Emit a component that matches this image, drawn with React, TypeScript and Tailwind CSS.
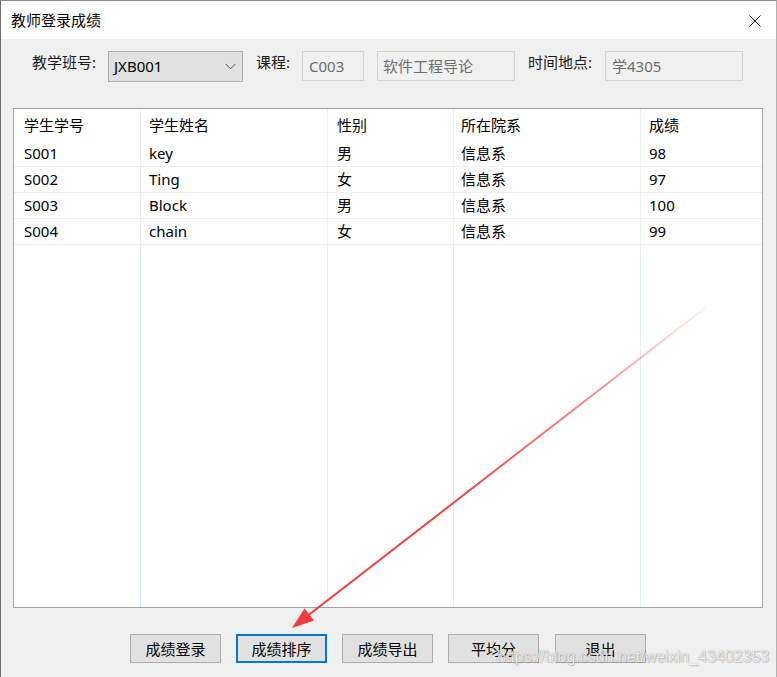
import React from "react";

const cols = [
  { w: "w-[127px]", pl: "pl-[10px]" },
  { w: "w-[187px]", pl: "pl-[8px]" },
  { w: "w-[126px]", pl: "pl-[9px]" },
  { w: "w-[187px]", pl: "pl-[7px]" },
  { w: "w-[121px]", pl: "pl-[8px]" },
];

const header = ["学生学号", "学生姓名", "性别", "所在院系", "成绩"];
const rows = [
  ["S001", "key", "男", "信息系", "98"],
  ["S002", "Ting", "女", "信息系", "97"],
  ["S003", "Block", "男", "信息系", "100"],
  ["S004", "chain", "女", "信息系", "99"],
];

function Row({ cells, h, bottom }: { cells: string[]; h: string; bottom: boolean }) {
  return (
    <div className={`flex ${h} ${bottom ? "border-b border-[#efefef]" : ""}`}>
      {cells.map((c, i) => (
        <div
          key={i}
          className={`${cols[i].w} ${cols[i].pl} flex items-center ${i < 4 ? "border-r border-[#efefef]" : ""}`}
        >
          {c}
        </div>
      ))}
    </div>
  );
}

export default function App() {
  return (
    <div
      className="relative w-[777px] h-[677px] overflow-hidden bg-[#f0f0f0] border-l border-t border-r border-l-[#6e6e6e] border-t-[#8c8c8c] border-r-[#b0b0b0] text-[15px] text-black flex flex-col"
      style={{ fontFamily: '"Noto Sans", "Noto Sans CJK SC", sans-serif' }}
    >
      {/* Title bar */}
      <div className="h-[38px] bg-white flex items-center justify-between pl-[10px] pr-[15px] shrink-0">
        <span className="leading-[20px]">教师登录成绩</span>
        <svg width="12" height="12" viewBox="0 0 12 12" className="mt-[1px]">
          <path d="M0.5 0.5 L11.5 11.5 M11.5 0.5 L0.5 11.5" stroke="#111" strokeWidth="1" fill="none" />
        </svg>
      </div>

      {/* Form row */}
      <div className="flex items-start pt-[12px] pl-[31px] shrink-0">
        <div className="w-[76px] leading-[20px] mt-[1px] text-[#1a1a1a]">教学班号:</div>
        <div className="w-[135px] h-[31px] bg-[#e1e1e1] border border-[#adadad] flex items-center justify-between pl-[5px] pr-[6px]">
          <span>JXB001</span>
          <svg width="11" height="7" viewBox="0 0 11 7">
            <path d="M0.5 0.8 L5.5 5.8 L10.5 0.8" stroke="#555" strokeWidth="1" fill="none" />
          </svg>
        </div>
        <div className="ml-[13px] w-[46px] leading-[20px] mt-[1px] text-[#1a1a1a]">课程:</div>
        <div className="w-[62px] h-[30px] bg-[#f0f0f0] border border-[#d4d4d4] flex items-center pl-[6px] text-[#6d6d6d]">
          C003
        </div>
        <div className="ml-[13px] w-[138px] h-[30px] bg-[#f0f0f0] border border-[#d4d4d4] flex items-center pl-[5px] text-[#6d6d6d]">
          软件工程导论
        </div>
        <div className="ml-[13px] w-[77px] leading-[20px] mt-[1px] text-[#1a1a1a]">时间地点:</div>
        <div className="w-[138px] h-[30px] bg-[#f0f0f0] border border-[#d4d4d4] flex items-center pl-[6px] text-[#6d6d6d]">
          学4305
        </div>
      </div>

      {/* Table */}
      <div className="mt-[26px] ml-[12px] w-[750px] h-[500px] border border-[#a3a3a3] bg-white flex flex-col shrink-0">
        <Row cells={header} h="h-[32px]" bottom={false} />
        {rows.map((r, i) => (
          <Row key={i} cells={r} h="h-[26px]" bottom />
        ))}
        <div className="flex flex-1">
          {cols.map((c, i) => (
            <div key={i} className={`${c.w} ${i < 4 ? "border-r border-[#e3eefb]" : ""}`} />
          ))}
        </div>
      </div>

      {/* Buttons */}
      <div className="flex gap-[15px] mt-[26px] ml-[129px] shrink-0">
        {["成绩登录", "成绩排序", "成绩导出", "平均分", "退出"].map((b, i) => (
          <div
            key={b}
            className={`w-[91px] h-[29px] bg-[#e1e1e1] flex items-center justify-center leading-[20px] ${
              i === 1 ? "border-2 border-[#0078d7]" : "border border-[#adadad]"
            } ${i === 4 ? "ml-[1px]" : ""}`}
          >
            {b}
          </div>
        ))}
      </div>

      {/* Red arrow annotation */}
      <svg className="absolute left-[-1px] top-[-1px] pointer-events-none" width="777" height="677" viewBox="0 0 777 677">
        <defs>
          <linearGradient id="ag" gradientUnits="userSpaceOnUse" x1="705" y1="308" x2="292" y2="628">
            <stop offset="0" stopColor="#f23a3a" stopOpacity="0.05" />
            <stop offset="0.25" stopColor="#f23a3a" stopOpacity="0.55" />
            <stop offset="0.6" stopColor="#f23a3a" stopOpacity="0.95" />
            <stop offset="1" stopColor="#f23a3a" stopOpacity="1" />
          </linearGradient>
        </defs>
        <line x1="705" y1="308" x2="308" y2="615.5" stroke="url(#ag)" strokeWidth="2" strokeLinecap="round" />
        <polygon points="292,628 314,620.5 304.5,608.5" fill="#f23a3a" />
      </svg>

      {/* Watermark */}
      <div
        className="absolute left-[496px] top-[647px] text-[16px] leading-[18px] text-white/85 whitespace-nowrap pointer-events-none [text-shadow:0_0_1px_rgba(0,0,0,0.45),1px_1px_1px_rgba(0,0,0,0.15)]"
        style={{ fontFamily: '"Liberation Sans", Arial, sans-serif' }}
      >
        https://blog.csdn.net/weixin_43402353
      </div>
    </div>
  );
}
